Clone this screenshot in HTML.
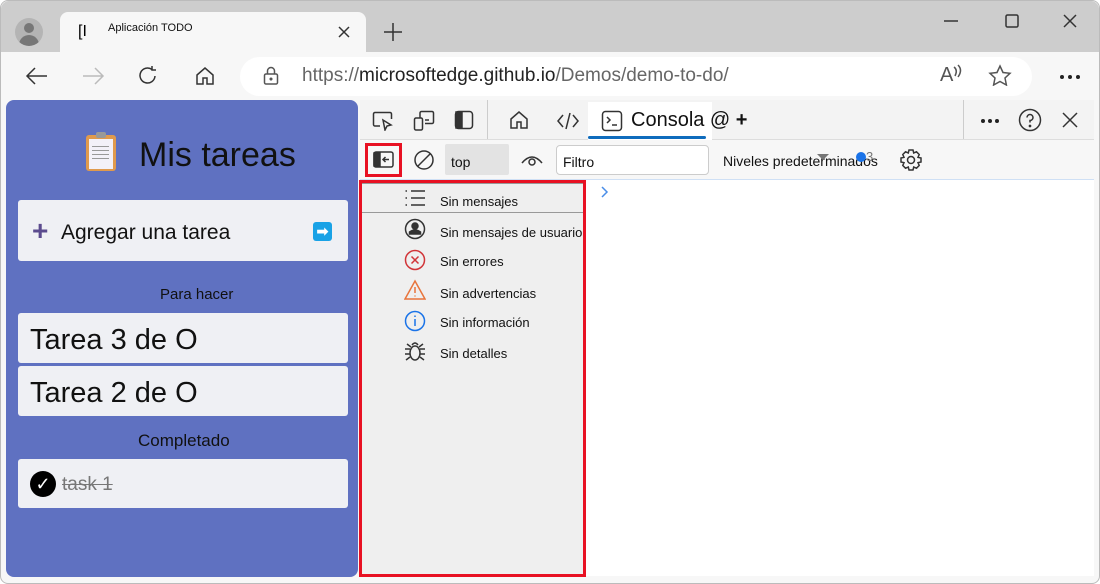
<!DOCTYPE html>
<html><head><meta charset="utf-8"><style>
*{box-sizing:border-box;margin:0;padding:0}
body{width:1100px;height:584px;background:#fff;font-family:"Liberation Sans",sans-serif;position:relative;overflow:hidden}
.abs{position:absolute}
svg{position:absolute;fill:none;stroke:#333;stroke-width:1.5}
.t{position:absolute;white-space:nowrap}
</style></head><body>
<div class="abs" style="left:0;top:0;width:1100px;height:584px;background:#f7f7f7;border:1px solid #bbb;border-radius:8px"></div>
<div class="abs" style="left:1px;top:1px;width:1098px;height:51px;background:#cdcdcd;border-radius:8px 8px 0 0"></div>
<div class="abs" style="left:15px;top:18px;width:28px;height:28px;border-radius:50%;background:#b4b4b4;overflow:hidden"><div class="abs" style="left:9px;top:5px;width:10px;height:10px;border-radius:50%;background:#777"></div><div class="abs" style="left:4px;top:17px;width:20px;height:14px;border-radius:10px 10px 0 0;background:#777"></div></div>
<div class="abs" style="left:60px;top:12px;width:306px;height:41px;background:#f7f7f7;border-radius:8px 8px 0 0"></div>
<div class="t" style="left:78px;top:23px;font-size:16px">[I</div>
<div class="t" style="left:108px;top:22px;font-size:11px;color:#111">Aplicación TODO</div>
<svg style="left:338px;top:26px" width="12" height="12"><path d="M1 1L11 11M11 1L1 11"/></svg>
<svg style="left:383px;top:22px" width="20" height="20"><path d="M10 1V19M1 10H19"/></svg>
<svg style="left:943px;top:19px" width="16" height="4"><path d="M1 2H15"/></svg>
<svg style="left:1005px;top:14px" width="14" height="14"><rect x="1" y="1" width="12" height="12" rx="1.5"/></svg>
<svg style="left:1063px;top:14px" width="14" height="14"><path d="M1 1L13 13M13 1L1 13"/></svg>
<svg style="left:25px;top:66px" width="24" height="20"><path d="M22 10H2M10 2L2 10L10 18"/></svg>
<svg style="left:81px;top:66px;stroke:#bbb" width="24" height="20"><path d="M2 10H22M14 2L22 10L14 18"/></svg>
<svg style="left:137px;top:65px" width="22" height="22"><path d="M18 11A7.5 7.5 0 1 1 15 4.5M15 1V5H19"/></svg>
<svg style="left:194px;top:65px" width="22" height="22"><path d="M3 10L11 3L19 10V19H13V13H9V19H3Z"/></svg>
<div class="abs" style="left:240px;top:57px;width:792px;height:39px;background:#fff;border-radius:20px"></div>
<svg style="left:263px;top:66px;stroke:#555" width="16" height="20"><rect x="1.5" y="8" width="13" height="10" rx="1.5"/><path d="M4.5 8V5A3.5 3.5 0 0 1 11.5 5V8"/><circle cx="8" cy="13" r=".8" fill="#555"/></svg>
<div class="t" style="left:302px;top:65px;font-size:19px;color:#222"><span style="color:#666">https://</span>microsoftedge.github.io<span style="color:#666">/Demos/demo-to-do/</span></div>
<div class="t" style="left:940px;top:64px;font-size:20px;color:#555">A</div>
<svg style="left:952px;top:64px;stroke:#555" width="12" height="14"><path d="M2 3Q6 6 3 12M6 1Q11 6 6 13"/></svg>
<svg style="left:988px;top:64px;stroke:#555" width="24" height="22"><path d="M12 2L15 8.5L22 9.3L17 14L18.4 21L12 17.5L5.6 21L7 14L2 9.3L9 8.5Z"/></svg>
<div class="abs" style="left:1060px;top:75px;width:4px;height:4px;border-radius:50%;background:#222;box-shadow:8px 0 #222,16px 0 #222"></div>
<div class="abs" style="left:6px;top:100px;width:352px;height:477px;background:#5f71c1;border-radius:8px"></div>
<div class="abs" style="left:86px;top:135px;width:30px;height:36px;background:#e09a4d;border-radius:3px"></div>
<div class="abs" style="left:89px;top:139px;width:24px;height:30px;background:#f3f1f8"></div>
<div class="abs" style="left:96px;top:132px;width:10px;height:6px;background:#999;border-radius:2px"></div>
<div class="abs" style="left:92px;top:146px;width:17px;height:13px;background:repeating-linear-gradient(#999 0 1px,transparent 1px 4px)"></div>
<div class="t" style="left:139px;top:136px;font-size:34px;color:#111">Mis tareas</div>
<div class="abs" style="left:18px;top:200px;width:330px;height:61px;background:#eff0f4;border-radius:3px"></div>
<div class="t" style="left:32px;top:215px;font-size:28px;color:#5b4b8e;font-weight:bold">+</div>
<div class="t" style="left:61px;top:221px;font-size:21px;color:#111">Agregar una tarea</div>
<div class="abs" style="left:313px;top:222px;width:19px;height:19px;background:#19a2e6;border-radius:3px;color:#fff;font-size:14px;line-height:19px;text-align:center;font-weight:bold">➡</div>
<div class="t" style="left:160px;top:286px;font-size:15px;color:#111">Para hacer</div>
<div class="abs" style="left:18px;top:313px;width:330px;height:50px;background:#eff0f4;border-radius:3px"></div>
<div class="t" style="left:30px;top:324px;font-size:29px;color:#111">Tarea 3 de O</div>
<div class="abs" style="left:18px;top:366px;width:330px;height:50px;background:#eff0f4;border-radius:3px"></div>
<div class="t" style="left:30px;top:377px;font-size:29px;color:#111">Tarea 2 de O</div>
<div class="t" style="left:138px;top:431px;font-size:17px;color:#111">Completado</div>
<div class="abs" style="left:18px;top:459px;width:330px;height:49px;background:#eff0f4;border-radius:3px"></div>
<div class="abs" style="left:30px;top:471px;width:26px;height:26px;background:#000;border-radius:50%;color:#fff;font-size:18px;text-align:center;line-height:26px">✓</div>
<div class="t" style="left:62px;top:474px;font-size:19px;color:#777;text-decoration:line-through">task 1</div>
<div class="abs" style="left:360px;top:100px;width:734px;height:476px;background:#fff"></div>
<div class="abs" style="left:360px;top:100px;width:734px;height:40px;background:#f3f3f3;border-bottom:1px solid #ddd"></div>
<div class="abs" style="left:487px;top:100px;width:1px;height:39px;background:#ccc"></div>
<div class="abs" style="left:963px;top:100px;width:1px;height:39px;background:#ccc"></div>
<svg style="left:372px;top:111px" width="22" height="20"><path d="M8 15H3A1.5 1.5 0 0 1 1.5 13.5V3A1.5 1.5 0 0 1 3 1.5H18A1.5 1.5 0 0 1 19.5 3V8M11 9L13 19L15 15L19 14Z"/></svg>
<svg style="left:413px;top:110px" width="22" height="22"><rect x="1.5" y="8" width="8" height="12" rx="1.5"/><path d="M7 8V3A1.5 1.5 0 0 1 8.5 1.5H19A1.5 1.5 0 0 1 20.5 3V12A1.5 1.5 0 0 1 19 13.5H12M12 10H16"/></svg>
<svg style="left:454px;top:110px" width="20" height="20"><rect x="1.5" y="1.5" width="17" height="17" rx="3"/><path d="M2 2H8V18H2Z" fill="#333"/></svg>
<svg style="left:508px;top:109px" width="22" height="22"><path d="M3 10L11 3L19 10V19H13V13H9V19H3Z"/></svg>
<svg style="left:556px;top:111px" width="24" height="20"><path d="M7 4L2 10L7 16M17 4L22 10L17 16M14 2L10 18"/></svg>
<div class="abs" style="left:588px;top:102px;width:124px;height:38px;background:#fff"></div>
<svg style="left:601px;top:110px" width="22" height="22"><rect x="1.5" y="1.5" width="19" height="19" rx="3"/><path d="M6 7L9 10L6 13M11 15H16"/></svg>
<div class="t" style="left:631px;top:109px;font-size:20px;color:#111">Consola @ <b>+</b></div>
<div class="abs" style="left:588px;top:136px;width:118px;height:3px;background:#0f6cbd;border-radius:2px"></div>
<div class="abs" style="left:981px;top:119px;width:4px;height:4px;border-radius:50%;background:#222;box-shadow:7px 0 #222,14px 0 #222"></div>
<svg style="left:1018px;top:108px" width="24" height="24"><circle cx="12" cy="12" r="10.5"/><path d="M9 9.5A3 3 0 1 1 12 12.5V14.5"/><circle cx="12" cy="18" r=".6" fill="#333"/></svg>
<svg style="left:1062px;top:112px" width="16" height="16"><path d="M1 1L15 15M15 1L1 15"/></svg>
<div class="abs" style="left:360px;top:140px;width:734px;height:40px;background:#f7f7f7;border-bottom:1px solid #cfe0f5"></div>
<div class="abs" style="left:365px;top:143px;width:37px;height:34px;border:3px solid #e81123"></div>
<svg style="left:373px;top:150px" width="22" height="20"><rect x="1" y="2" width="19" height="15" rx="2"/><path d="M1 3H7V16H1Z" fill="#333"/><path d="M16 9.5H10M12.5 7L10 9.5L12.5 12"/></svg>
<svg style="left:413px;top:149px" width="22" height="22"><circle cx="11" cy="11" r="9"/><path d="M4.5 17.5L17.5 4.5"/></svg>
<div class="abs" style="left:445px;top:144px;width:64px;height:31px;background:#e3e3e3;border-radius:2px"></div>
<div class="t" style="left:451px;top:154px;font-size:14px;color:#111">top</div>
<svg style="left:520px;top:152px" width="24" height="16"><path d="M2 11Q12 -1 22 11"/><circle cx="12" cy="10" r="3"/></svg>
<div class="abs" style="left:556px;top:145px;width:153px;height:30px;background:#fff;border:1px solid #ccc;border-radius:4px"></div>
<div class="t" style="left:563px;top:154px;font-size:14px;color:#111">Filtro</div>
<div class="t" style="left:723px;top:153px;font-size:14px;color:#111">Niveles predeterminados</div>
<div class="abs" style="left:817px;top:154px;width:0;height:0;border-left:6px solid transparent;border-right:6px solid transparent;border-top:6px solid #777"></div>
<div class="abs" style="left:856px;top:152px;width:10px;height:10px;border-radius:50%;background:#1a73e8"></div>
<div class="t" style="left:866px;top:149px;font-size:13px;color:#777">3</div>
<svg style="left:899px;top:148px" width="24" height="24"><circle cx="12" cy="12" r="3.5"/><path d="M10 2H14L14.7 5L17.5 3.8L20.2 6.5L19 9.3L22 10V14L19 14.7L20.2 17.5L17.5 20.2L14.7 19L14 22H10L9.3 19L6.5 20.2L3.8 17.5L5 14.7L2 14V10L5 9.3L3.8 6.5L6.5 3.8L9.3 5Z"/></svg>
<div class="abs" style="left:359px;top:180px;width:227px;height:397px;background:#efefef;border:3px solid #e81123"></div>
<div class="abs" style="left:362px;top:183px;width:221px;height:1px;background:#999"></div>
<div class="abs" style="left:362px;top:212px;width:221px;height:1px;background:#999"></div>
<svg style="left:600px;top:185px;stroke:#4a8ee8" width="10" height="14"><path d="M2 2L7 7L2 12"/></svg>
<svg style="left:404px;top:189px" width="22" height="18"><path d="M7 2H21M7 9H21M7 16H21M1.5 2H3M1.5 9H3M1.5 16H3"/></svg>
<div class="t" style="left:440px;top:194px;font-size:13px;color:#111">Sin mensajes</div>
<svg style="left:404px;top:218px" width="22" height="22"><circle cx="11" cy="11" r="9.5"/><circle cx="11" cy="8" r="3" fill="#333"/><path d="M5.5 14Q11 10 16.5 14V16H5.5Z" fill="#333"/></svg>
<div class="t" style="left:440px;top:225px;font-size:13px;color:#111">Sin mensajes de usuario</div>
<svg style="left:404px;top:249px;stroke:#d13438" width="22" height="22"><circle cx="11" cy="11" r="9.5"/><path d="M7.5 7.5L14.5 14.5M14.5 7.5L7.5 14.5"/></svg>
<div class="t" style="left:440px;top:254px;font-size:13px;color:#111">Sin errores</div>
<svg style="left:404px;top:279px;stroke:#e8743b" width="22" height="22"><path d="M11 2L21 20H1Z"/><path d="M11 8V14M11 16.5V17.5"/></svg>
<div class="t" style="left:440px;top:286px;font-size:13px;color:#111">Sin advertencias</div>
<svg style="left:404px;top:310px;stroke:#1a73e8" width="22" height="22"><circle cx="11" cy="11" r="9.5"/><path d="M11 9V16M11 5.5V7"/></svg>
<div class="t" style="left:440px;top:315px;font-size:13px;color:#111">Sin información</div>
<svg style="left:404px;top:340px" width="22" height="22"><ellipse cx="11" cy="13" rx="5" ry="7"/><path d="M8 5Q11 1 14 5M1 9H6M16 9H21M1 14H6M16 14H21M2 20L6 17M20 20L16 17M3 4L7 7M19 4L15 7"/></svg>
<div class="t" style="left:440px;top:346px;font-size:13px;color:#111">Sin detalles</div>
</body></html>
